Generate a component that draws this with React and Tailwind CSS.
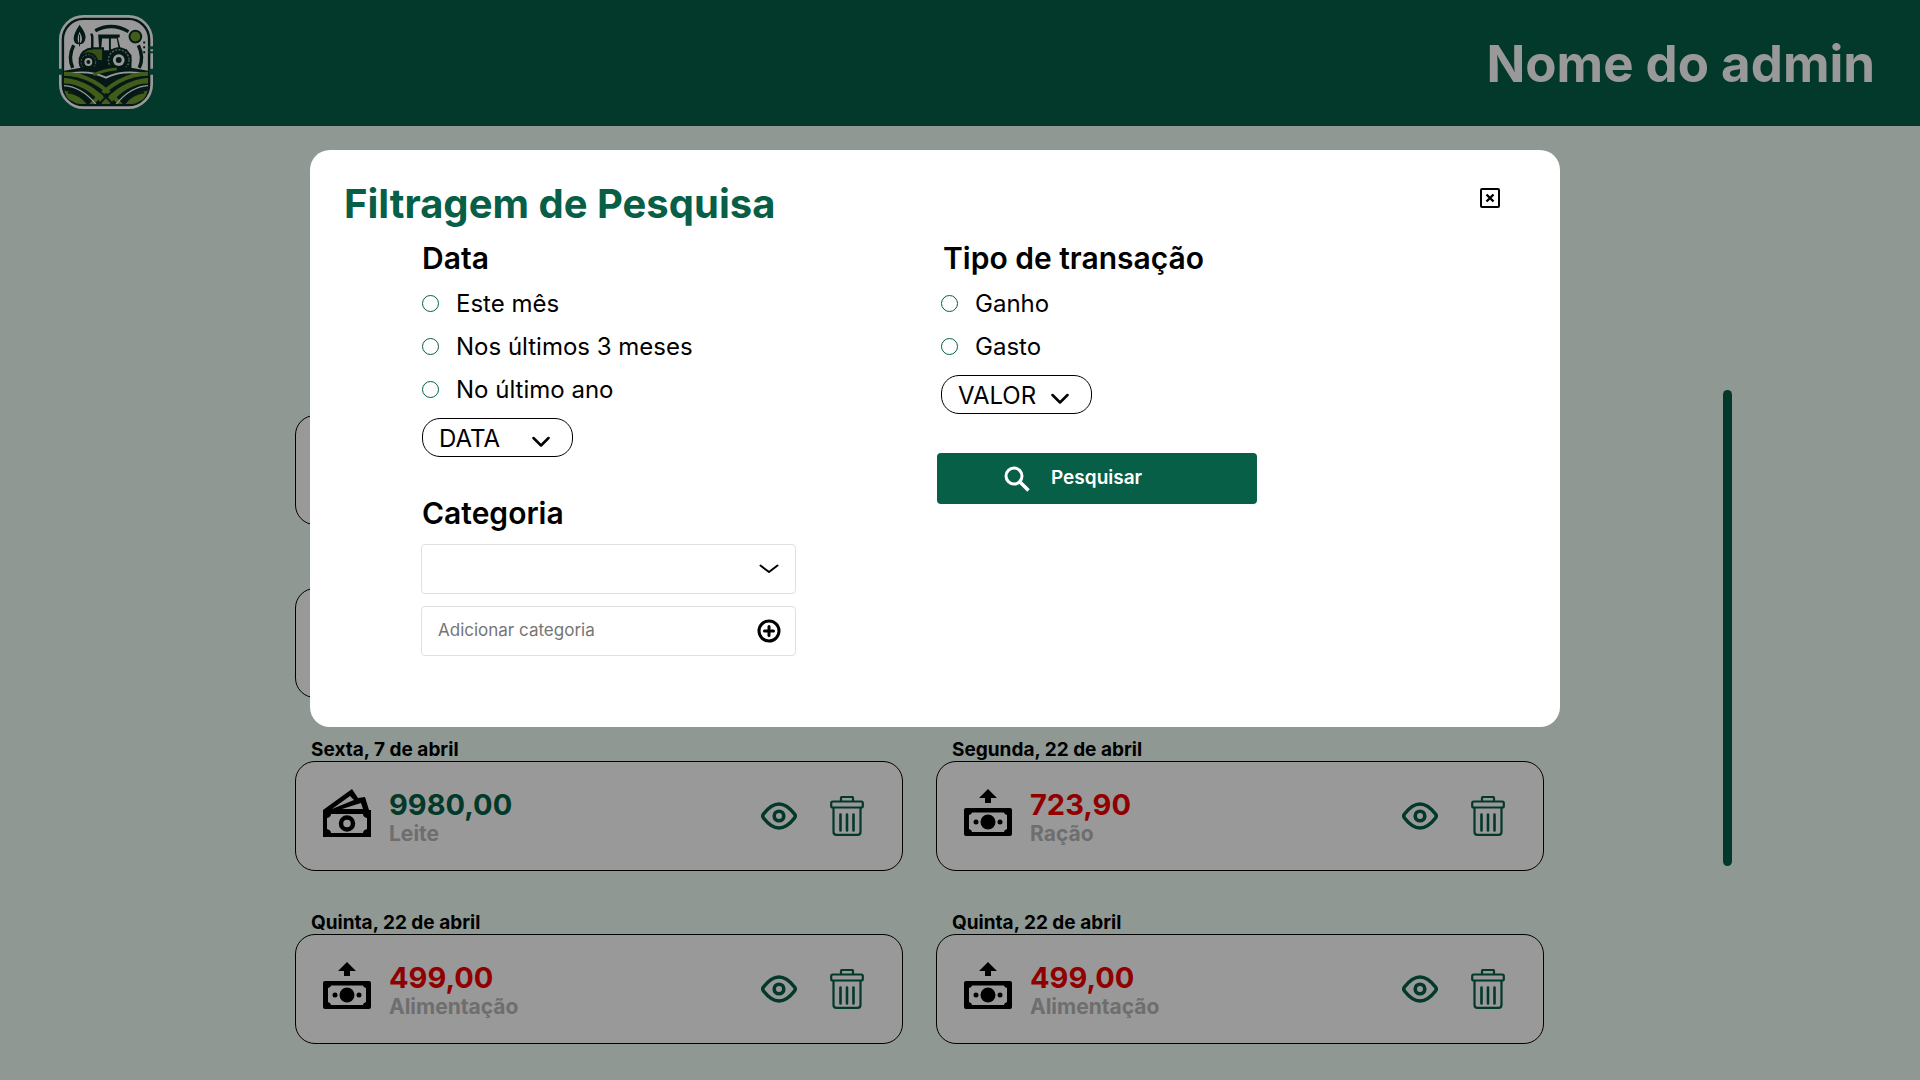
import React from "react";

const ENTRIES = [
  { id: 1 },
  { id: 2 },
  { id: 3 },
  { id: 4 },
  { id: 5, date: "Sexta, 7 de abril", value: "9980,00", label: "Leite", gain: true },
  { id: 6, date: "Segunda, 22 de abril", value: "723,90", label: "Ração" },
  { id: 7, date: "Quinta, 22 de abril", value: "499,00", label: "Alimentação" },
  { id: 8, date: "Quinta, 22 de abril", value: "499,00", label: "Alimentação" },
];

function Logo() {
  return (
    <svg viewBox="0 0 98 98" className="h-24 w-24" role="img" aria-label="Fazenda">
      <defs>
        <clipPath id="field">
          <path d="M6 58 Q49 48 92 58 V72 Q92 92 72 92 H26 Q6 92 6 72Z" />
        </clipPath>
      </defs>
      <rect x="1" y="1" width="96" height="96" rx="25" fill="#fff" />
      <rect x="5" y="5" width="88" height="88" rx="21" fill="#fff" stroke="#082a26" strokeWidth="2.5" />
      <path d="M0 56h5v6H0zM93 56h5v6h-5zM92 33h6v3h-6zM92 38h6v2h-6z" fill="#065f46" />
      <g fill="none" stroke="#082a26" strokeWidth="3.5">
        <path d="M38 17 Q55 8 72 18" />
        <path d="M16 32 Q10 44 15 55" />
        <path d="M82 32 Q88 44 83 55" />
      </g>
      <path d="M22 11 Q29 20 28 25 Q27 31 22 31 Q16 31 16 25 Q16 20 22 11Z" fill="#082a26" />
      <path d="M22 18 Q27 27 22 30 Q18 27 22 18Z" fill="#fff" />
      <path d="M22 21v12" stroke="#082a26" />
      <circle cx="79" cy="23" r="6" fill="#6f9a2c" stroke="#082a26" strokeWidth="2" />
      <path d="M87 28h2v2h-2zM87 33h2v2h-2zM87 38h2v2h-2z" fill="#082a26" />
      <path d="M41 21h22v3h-2l3 12h6l5 6v14H37V40l5-4z" fill="#082a26" />
      <path d="M45 25h7v12h-8zM54 25h6l2 11h-8z" fill="#fff" />
      <path d="M22 46 Q24 36 36 35 H46 V48 H24Z" fill="#5e8427" stroke="#082a26" strokeWidth="2" />
      <path d="M35 36V23l-1-3" fill="none" stroke="#082a26" strokeWidth="2.5" />
      <path d="M57 37 Q67 33 74 42 L68 40 Q59 37 53 46Z" fill="#6f9a2c" />
      <circle cx="62" cy="47" r="13" fill="#082a26" />
      <circle cx="62" cy="47" r="10.5" fill="none" stroke="#8a9a96" strokeWidth="1.5" strokeDasharray="2 1.5" />
      <circle cx="62" cy="47" r="6" fill="#fff" />
      <circle cx="62" cy="47" r="3" fill="#082a26" />
      <circle cx="31" cy="49" r="10" fill="#082a26" />
      <circle cx="31" cy="49" r="7.5" fill="none" stroke="#8a9a96" strokeDasharray="2 1.5" />
      <circle cx="31" cy="49" r="4" fill="#fff" />
      <circle cx="31" cy="49" r="2" fill="#082a26" />
      <g clipPath="url(#field)" fill="none">
        <path d="M0 48h98v50H0z" fill="#082a26" />
        <path d="M5 62 Q30 56 49 65 Q67 56 93 62" stroke="#fff" strokeWidth="2" />
        <path d="M4 68 Q30 66 54 98" stroke="#6f9a2c" strokeWidth="6" />
        <path d="M94 68 Q68 66 44 98" stroke="#6f9a2c" strokeWidth="6" />
        <path d="M4 61 Q38 60 67 96" stroke="#6f9a2c" strokeWidth="4" />
        <path d="M94 61 Q60 60 31 96" stroke="#6f9a2c" strokeWidth="4" />
        <path d="M4 73 Q26 73 43 98M94 73 Q72 73 55 98" stroke="#fff" strokeWidth="1.2" />
        <path d="M4 82 Q20 83 30 98M94 82 Q78 83 68 98" stroke="#6f9a2c" strokeWidth="8" />
        <path d="M36 62 Q44 58 60 56" stroke="#6f9a2c" strokeWidth="3" />
        <path d="M10 80 Q24 82 32 94M88 80 Q74 82 66 94M4 64 Q36 66 60 97M94 64 Q62 66 38 97" stroke="#082a26" strokeWidth="2" />
      </g>
    </svg>
  );
}

function CashStack() {
  return (
    <svg viewBox="0 0 48 50" className="mb-1 h-[50px] w-12 shrink-0" aria-hidden="true">
      <path fillRule="evenodd" d="M0 21 L29 0 L35 9 L42 8 L46 21 H48 V48 H0Z M9 20 L27 7 L31 11Z M19 20 L38 14 L40 20Z M8 25 Q8 28 4 29 V40 Q8 41 8 44 H40 Q40 41 44 40 V29 Q40 28 40 25Z" />
      <circle cx="24" cy="34.5" r="6" fill="none" stroke="#000" strokeWidth="4.5" />
    </svg>
  );
}

function CashOut() {
  return (
    <svg viewBox="0 0 48 48" className="mb-1.5 h-12 w-12 shrink-0" aria-hidden="true">
      <path d="M24 0 L33 9 H27 V14 H21 V9 H15Z" />
      <path fillRule="evenodd" d="M2 19H46Q48 19 48 21V45Q48 47 46 47H2Q0 47 0 45V21Q0 19 2 19Z M8 23.5Q8 25 5 26V40Q8 41 8 43H40Q40 41 43 40V26Q40 25 40 23.5Z" />
      <circle cx="24" cy="33" r="7.5" />
      <circle cx="12" cy="33" r="2.5" />
      <circle cx="36" cy="33" r="2.5" />
    </svg>
  );
}

function Eye() {
  return (
    <svg viewBox="0 0 36 28" className="h-7 w-9" fill="none" stroke="#065f46" aria-hidden="true">
      <path d="M2.5 12 Q18 -8 33.5 12 Q35 14 33.5 16 Q18 36 2.5 16 Q1 14 2.5 12Z" strokeWidth="3.6" />
      <circle cx="18" cy="14" r="4.8" strokeWidth="3.6" />
    </svg>
  );
}

function Trash() {
  return (
    <svg viewBox="0 0 34 40" className="h-10 w-[34px]" fill="none" stroke="#065f46" strokeWidth="2.2" strokeLinejoin="round" strokeLinecap="round" aria-hidden="true">
      <path d="M11 5V2Q11 1 12 1H22Q23 1 23 2V5" />
      <rect x="1.2" y="5.5" width="31.6" height="6" rx="1.5" />
      <path d="M3.5 12V36Q3.5 38.8 6.5 38.800H27.5Q30.5 38.8 30.5 36V12" />
      <path d="M10.5 18.5V34.5M17 18.5V34.5M23.5 18.5V34.5" strokeWidth="2.6" />
    </svg>
  );
}

function Entry({ date, value, label, gain }) {
  return (
    <article>
      <h3 className="h-6 pl-4 text-[19px] leading-[26px] font-bold">{date}</h3>
      <div className="flex h-[110px] items-center rounded-[20px] border border-black bg-white pr-[38px] pl-[27px]">
        {value && (
          <>
            {gain ? <CashStack /> : <CashOut />}
            <div className="ml-[18px] flex-1 pt-1">
              <p className={gain ? "text-[29px] leading-8 font-bold text-[#065f46]" : "text-[29px] leading-8 font-bold text-[#f00000]"}>{value}</p>
              <p className="text-[21px] leading-[26px] font-bold text-[#b8b8b8]">{label}</p>
            </div>
            <button type="button" aria-label="Visualizar"><Eye /></button>
            <button type="button" aria-label="Excluir" className="ml-[33px]"><Trash /></button>
          </>
        )}
      </div>
    </article>
  );
}

function Option({ name, children }) {
  return (
    <label className="flex h-[43px] items-center gap-[17px] text-[24px]">
      <input type="radio" name={name} className="h-[17px] w-[17px] appearance-none rounded-full border border-[#065f46] checked:bg-[#065f46]" />
      {children}
    </label>
  );
}

function Pill({ children }) {
  return (
    <button type="button" className="mt-[7px] flex h-[39px] w-[151px] items-center justify-between rounded-[18px] border border-black pt-0.5 pr-[22px] pl-4 text-[24px]">
      {children}
      <svg viewBox="0 0 18 12" className="mt-1.5 h-3 w-[18px]" fill="none" stroke="#000" strokeWidth="2.5" strokeLinecap="round" strokeLinejoin="round" aria-hidden="true">
        <path d="M1.5 2 9 9.500 16.5 2" />
      </svg>
    </button>
  );
}

function FilterDialog() {
  return (
    <section role="dialog" aria-label="Filtragem de Pesquisa" className="w-full rounded-[20px] bg-white pt-[30px] pr-[60px] pb-[71px] pl-[34px]">
      <header className="flex items-start justify-between">
        <h1 className="text-[40px] leading-12 font-bold text-[#065f46]">Filtragem de Pesquisa</h1>
        <button type="button" aria-label="Fechar" className="mt-2">
          <svg viewBox="0 0 20 20" className="h-5 w-5" fill="none" stroke="#000" strokeWidth="2" aria-hidden="true">
            <rect x="1" y="1" width="18" height="18" rx="1" />
            <path d="M6.5 6.5l7 7M13.5 6.5l-7 7" strokeWidth="2.4" />
          </svg>
        </button>
      </header>
      <div className="flex pl-[77px]">
        <div className="w-[375px]">
          <div className="pl-px">
            <fieldset>
              <legend className="pt-3 text-[30px] leading-9 font-semibold">Data</legend>
              <div className="pt-1.5">
                <Option name="data">Este mês</Option>
                <Option name="data">Nos últimos 3 meses</Option>
                <Option name="data">No último ano</Option>
              </div>
            </fieldset>
            <Pill>DATA</Pill>
            <label htmlFor="categoria" className="mt-[38px] block text-[30px] leading-9 font-semibold">Categoria</label>
          </div>
          <div className="relative mt-[13px]">
            <select id="categoria" defaultValue="" className="h-[50px] w-full appearance-none rounded-[4px] border border-[#e0e0e0] bg-white px-4">
              <option value=""></option>
            </select>
            <svg viewBox="0 0 20 10" className="pointer-events-none absolute top-5 right-[17px] h-2.5 w-5" fill="none" stroke="#000" strokeWidth="2" strokeLinecap="round" strokeLinejoin="round" aria-hidden="true">
              <path d="M1.5 1.5 10 8 18.5 1.5" />
            </svg>
          </div>
          <div className="mt-3 flex h-[50px] items-center rounded-[4px] border border-[#e0e0e0] pr-3.5 pl-4">
            <input aria-label="Adicionar categoria" placeholder="Adicionar categoria" className="min-w-0 flex-1 text-[17px] outline-none placeholder:text-[#757575]" />
            <button type="button" aria-label="Adicionar">
              <svg viewBox="0 0 24 24" className="h-6 w-6" fill="none" stroke="#000" strokeWidth="3" strokeLinecap="round" aria-hidden="true">
                <circle cx="12" cy="12" r="10" />
                <path d="M12 7.5v9M7.5 12h9" />
              </svg>
            </button>
          </div>
        </div>
        <div className="ml-[141px]">
          <fieldset className="pl-1">
            <legend className="ml-0.5 pt-3 text-[30px] leading-9 font-semibold">Tipo de transação</legend>
            <div className="pt-1.5">
              <Option name="tipo">Ganho</Option>
              <Option name="tipo">Gasto</Option>
            </div>
            <Pill>VALOR</Pill>
          </fieldset>
          <button type="button" className="mt-[39px] flex h-[51px] w-[320px] items-center rounded-[4px] bg-[#065f46] pl-[67px] text-[19px] font-semibold text-white">
            <svg viewBox="0 0 26 26" className="mr-[21px] h-[26px] w-[26px]" fill="none" stroke="#fff" strokeWidth="3" aria-hidden="true">
              <circle cx="10" cy="10" r="8" />
              <path d="M15.5 15.5 24.5 24.5" strokeWidth="3.5" />
            </svg>
            Pesquisar
          </button>
        </div>
      </div>
    </section>
  );
}

export default function App() {
  return (
    <div className="min-h-screen bg-[#eefdf6] font-['Inter',sans-serif] text-black">
      <header className="flex h-[126px] items-center justify-between bg-[#065f46] pr-[45px] pb-0.5 pl-[58px]">
        <Logo />
        <p className="pt-1 text-[51px] font-bold text-white">Nome do admin</p>
      </header>
      <main className="flex pt-[264px] pr-[188px] pb-9 pl-[295px]">
        <div className="mt-px grid flex-1 grid-cols-2 gap-x-[33px] gap-y-[39px]">
          {ENTRIES.map((e) => (
            <Entry key={e.id} {...e} />
          ))}
        </div>
        <div className="ml-[179px] h-[476px] w-[9px] rounded-full bg-[#065f46]" />
      </main>
      <div className="fixed inset-0 flex items-start bg-black/40 pt-[150px] pr-[360px] pl-[310px]">
        <FilterDialog />
      </div>
    </div>
  );
}
